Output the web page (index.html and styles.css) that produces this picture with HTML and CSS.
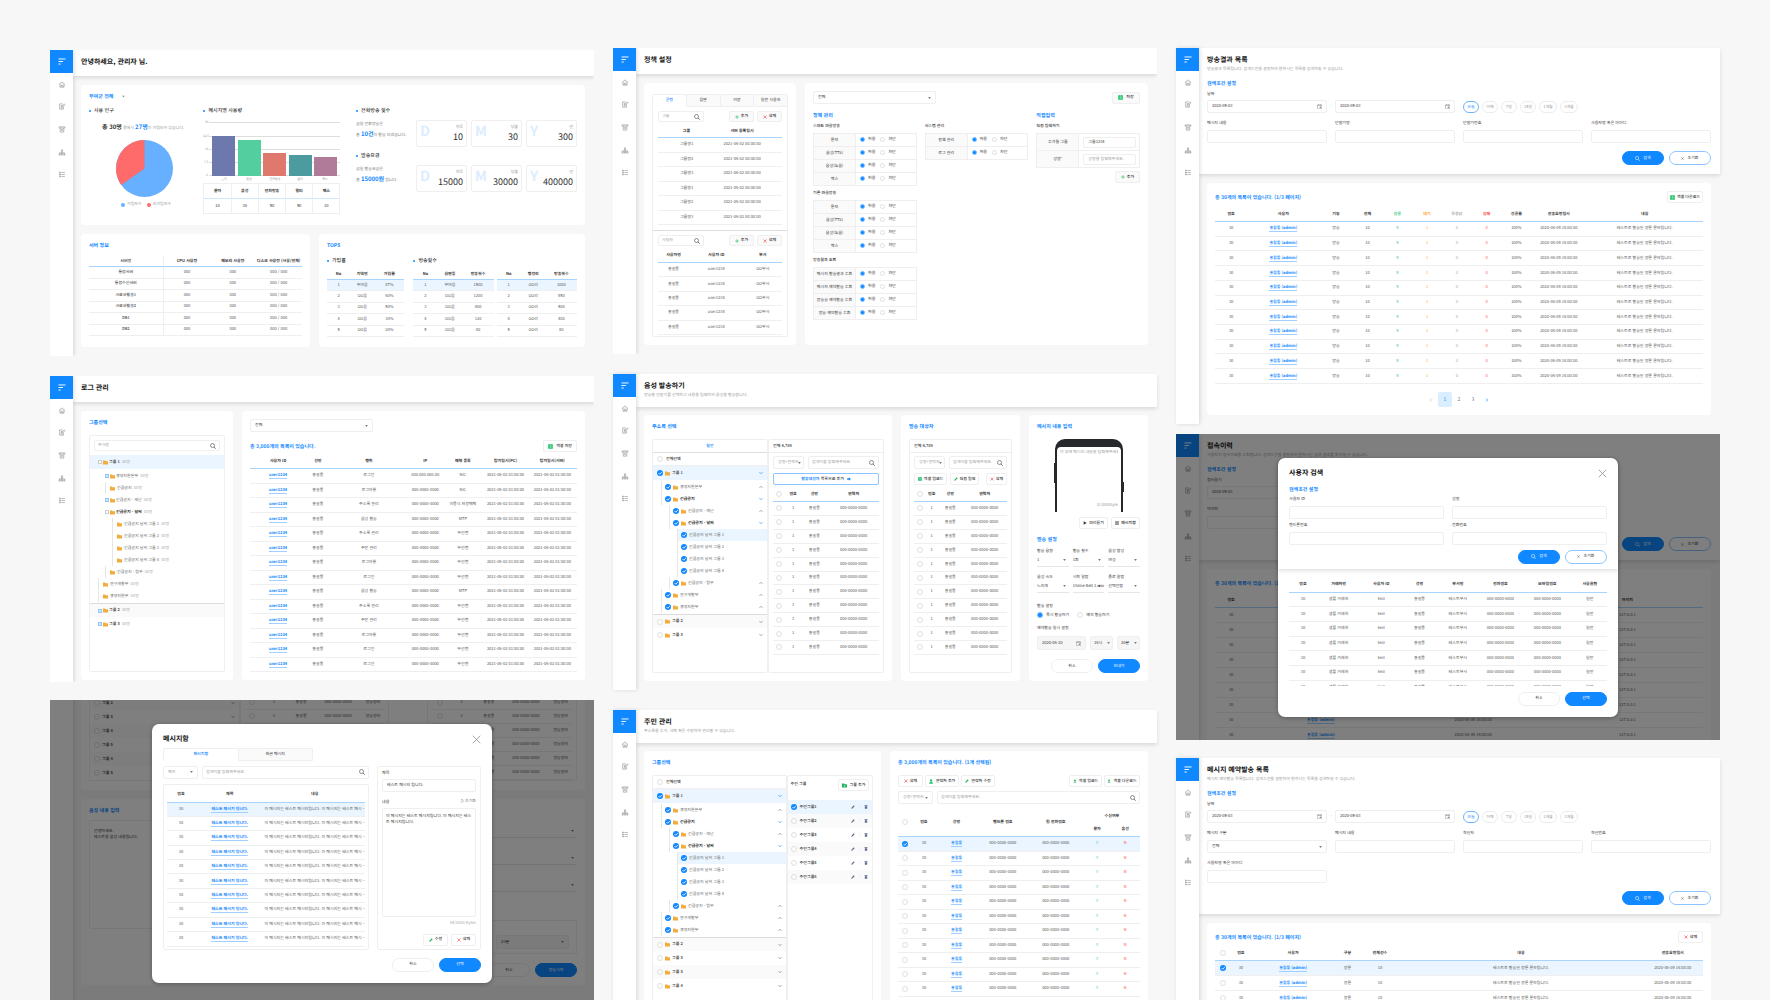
FILE: index.html
```html
<!DOCTYPE html>
<html lang="ko">
<head>
<meta charset="utf-8">
<meta name="viewport" content="width=device-width, initial-scale=1">
<title>마을방송 관리자</title>
<link rel="stylesheet" href="styles.css">
</head>
<body>
<svg class="sprite" aria-hidden="true">
  <symbol id="i-menu" viewBox="0 0 24 22"><path d="M1 3h22M1 11h14M1 19h7" stroke="currentColor" stroke-width="3" fill="none"/></symbol>
  <symbol id="i-home" viewBox="0 0 24 24"><path d="M2 12 12 3l10 9M5 10v11h14V10M9 21v-6h6v6M12 9v2" fill="none" stroke="currentColor" stroke-width="2"/></symbol>
  <symbol id="i-edit" viewBox="0 0 24 24"><path d="M14 3H4v18h13v-8M8 9h5M8 13h3M8 17h6M11 14l1-4 8-7 2 3-7 7z" fill="none" stroke="currentColor" stroke-width="2"/></symbol>
  <symbol id="i-box" viewBox="0 0 24 24"><path d="M2 3h20v4H2zM6 7v14h12V7M9 12h6M9 16h6" fill="none" stroke="currentColor" stroke-width="2"/></symbol>
  <symbol id="i-org" viewBox="0 0 24 24"><path d="M12 8v8M4 16v-3h16v3M10 3h4v5h-4zM2 16h4v5H2zM10 16h4v5h-4zM18 16h4v5h-4z" fill="none" stroke="currentColor" stroke-width="2"/></symbol>
  <symbol id="i-list" viewBox="0 0 24 24"><path d="M5 2v20M2 5h6M2 12h6M2 19h6M10 5h12M10 12h12M10 19h12" fill="none" stroke="currentColor" stroke-width="2"/></symbol>
  <symbol id="i-search" viewBox="0 0 24 24"><circle cx="10" cy="10" r="8" fill="none" stroke="currentColor" stroke-width="2.6"/><path d="m16 16 7 7" stroke="currentColor" stroke-width="3"/></symbol>
  <symbol id="i-folder" viewBox="0 0 24 22"><path d="M0 1h10l3 4h11v16H0z" fill="#f1ac3c"/></symbol>
  <symbol id="i-plus" viewBox="0 0 24 24"><path d="M12 1v22M1 12h22" stroke="#28c76f" stroke-width="4"/></symbol>
  <symbol id="i-del" viewBox="0 0 24 24"><path d="m3 3 18 18M21 3 3 21" stroke="#ff4d4d" stroke-width="4"/></symbol>
  <symbol id="i-x" viewBox="0 0 24 24"><path d="m2 2 20 20M22 2 2 22" stroke="currentColor" stroke-width="3"/></symbol>
  <symbol id="i-close" viewBox="0 0 24 24"><path d="m2 2 20 20M22 2 2 22" stroke="currentColor" stroke-width="2"/></symbol>
  <symbol id="i-pen" viewBox="0 0 24 24"><path d="m1 23 2-7L17 2l5 5L8 21z" fill="currentColor"/></symbol>
  <symbol id="i-trash" viewBox="0 0 24 24"><path d="M3 2h18v4H3zM5 8h14v15H5z" fill="currentColor"/></symbol>
  <symbol id="i-cal" viewBox="0 0 24 24"><path d="M2 4h20v19H2zM2 7h20M7 1v4M17 1v4" fill="none" stroke="currentColor" stroke-width="2"/><path d="M13 13h6v6h-6z" fill="currentColor"/></symbol>
  <symbol id="i-excel" viewBox="0 0 24 24"><path d="M1 1h22v22H1z" fill="#1fc36a"/><path d="M8 6h9M8 12h9M8 18h9" stroke="#fff" stroke-width="2"/></symbol>
  <symbol id="i-chev" viewBox="0 0 24 24"><path d="m3 7 9 9 9-9" fill="none" stroke="currentColor" stroke-width="4"/></symbol>
  <symbol id="i-caret" viewBox="0 0 24 24"><path d="M2 6h20L12 18z" fill="currentColor"/></symbol>
  <symbol id="i-go" viewBox="0 0 24 24"><path d="M1 7h11V1l11 11-11 11v-6H1z" fill="currentColor"/></symbol>
  <symbol id="i-play" viewBox="0 0 24 24"><path d="m4 2 18 10L4 22z" fill="currentColor"/></symbol>
  <symbol id="i-mail" viewBox="0 0 24 24"><path d="M1 4h22v17H1zM5 9h14M5 14h14" fill="none" stroke="currentColor" stroke-width="3"/></symbol>
  <symbol id="i-redo" viewBox="0 0 24 24"><path d="M4 12a8 8 0 1 0 8-8M12 0v8L7 4z" fill="none" stroke="currentColor" stroke-width="2"/></symbol>
  <symbol id="i-user" viewBox="0 0 24 24"><circle cx="10" cy="7" r="6" fill="#28c76f"/><path d="M0 23c0-12 20-12 20 0z" fill="#28c76f"/></symbol>
  <symbol id="i-up" viewBox="0 0 24 24"><path d="M12 1 4 10h5v8h6v-8h5zM4 20h16v3H4z" fill="#1fb45f"/></symbol>
  <symbol id="i-down" viewBox="0 0 24 24"><path d="m12 18 8-9h-5V1H9v8H4zM4 20h16v3H4z" fill="#1fb45f"/></symbol>
  <symbol id="i-addf" viewBox="0 0 24 22"><path d="M0 1h10l3 4h11v16H0z" fill="#1fb45f"/><path d="M12 9v8M8 13h8" stroke="#fff" stroke-width="2"/></symbol>
</svg>

<main class="canvas">
  <div class="stack">
    <section class="board board--wide">
      <div class="body">
        <header class="top"><h1>안녕하세요, 관리자 님.</h1></header>
        <div class="content content--dash">
          <article class="card card--usage">
            <h2 class="region">부여군 전체 <svg class="ic3"><use href="#i-caret"/></svg></h2>
            <div class="usage">
              <div class="people">
                <h3>사용 인구</h3>
                <p class="sum"><b>총 30명</b> 중에서 <b class="blue">27명</b>이 가입되어 있습니다.</p>
                <svg class="pie" viewBox="-1 -1 2 2"><circle r="1" fill="#66b0ff"/><path d="M0 0V-1A1 1 0 0 0-.817 .576Z" fill="#ff6b6b"/></svg>
                <p class="legend"><i class="dot dot--blue"></i>가입자수 <i class="dot dot--red"></i>비가입자수</p>
              </div>
              <div class="messages">
                <h3>메시지별 사용량</h3>
                <svg class="chart" viewBox="0 0 137 64">
                  <path d="M6 3.500H137M6 17.500H137M6 30.500H137M6 43.500H137M6 56.500H137" stroke="#ddd"/>
                  <g class="axis"><text x="2" y="4">30</text><text x="0" y="18">22.5</text><text x="2" y="31">15</text><text x="1" y="44">7.5</text><text x="3" y="57">0</text></g>
                  <path d="M9 17h23v40H9z" fill="#6d79ac"/><path d="M35 21h23v36H35z" fill="#52ce9f"/><path d="M60 34h23v23H60z" fill="#df786d"/><path d="M86 36h23v21H86z" fill="#4c9c9f"/><path d="M111 38h23v19h-23z" fill="#b07b99"/>
                  <g class="axis axis--x"><text x="21" y="61">문자</text><text x="46" y="61">음성</text><text x="72" y="61">전화방송</text><text x="97" y="61">멀티</text><text x="122" y="61">팩스</text></g>
                </svg>
                <table class="counts"><thead><tr><th>문자</th><th>음성</th><th>전화방송</th><th>멀티</th><th>팩스</th></tr></thead><tbody><tr><td>10</td><td>30</td><td>50</td><td>50</td><td>10</td></tr></tbody></table>
              </div>
              <div class="stats">
                <h3>전화방송 횟수</h3>
                <div class="stat"><p>금일 전화방송은<br>총 <b class="blue">10건</b>이 발송 되었습니다.</p>
                  <dl><div data-unit="D"><dt>하루</dt><dd>10</dd></div><div data-unit="M"><dt>당월</dt><dd>30</dd></div><div data-unit="Y"><dt>년</dt><dd>300</dd></div></dl></div>
                <h3>발송요금</h3>
                <div class="stat"><p>금일 발송요금은<br>총 <b class="blue">15000원</b> 입니다.</p>
                  <dl><div data-unit="D"><dt>하루</dt><dd>15000</dd></div><div data-unit="M"><dt>당월</dt><dd>30000</dd></div><div data-unit="Y"><dt>년</dt><dd>400000</dd></div></dl></div>
              </div>
            </div>
          </article>
          <div class="dash-row">
            <article class="card"><h2>서버 정보</h2><table class="data servers" data-table="servers"></table></article>
            <article class="card"><h2>TOP5</h2>
              <div class="tops">
                <div><h3>가입률</h3><table class="data top-table" data-table="top1"></table></div>
                <div><h3>방송횟수</h3><div class="pair"><table class="data top-table" data-table="top2"></table><table class="data top-table" data-table="top3"></table></div></div>
              </div>
            </article>
          </div>
        </div>
      </div>
    </section>

    <section class="board board--wide">
      <div class="body">
        <header class="top"><h1>로그 관리</h1></header>
        <div class="content cols-log">
          <article class="card"><h2>그룹선택</h2>
            <div class="pane pane--fill gap-lg">
              <div class="pad"><div class="search search--low"><input aria-label="부서명" placeholder="부서명"><svg class="ic6"><use href="#i-search"/></svg></div></div>
              <ul class="tree" data-tree="log"></ul>
            </div>
          </article>
          <article class="card">
            <select class="field w-select" aria-label="구분"><option>전체</option></select>
            <div class="bar bar--log"><h2>총 3,000개의 목록이 있습니다.</h2><button class="btn"><svg class="ic5"><use href="#i-excel"/></svg>엑셀 저장</button></div>
            <table class="data logs" data-table="logs"></table>
          </article>
        </div>
      </div>
    </section>

    <section class="board board--wide board--late">
      <div class="body body--scrolled">
        <article class="card card--cut">
          <div class="cut cut--list"><ul class="tree" data-tree="back"></ul></div>
          <div class="cut"><table class="data back" data-table="back1"></table></div>
          <div class="cut cut--gap"><table class="data back" data-table="back2"></table></div>
        </article>
        <article class="card card--voice">
          <div><h2>음성 내용 입력</h2><textarea class="area" aria-label="음성 내용">안녕하세요.
테스트용 음성 내용입니다.</textarea></div>
          <div class="settings">
            <select class="line" aria-label="음량"><option> </option></select>
            <select class="line" aria-label="횟수"><option> </option></select>
            <select class="line" aria-label="알람"><option> </option></select>
            <div class="reserve"><select class="field field--gray" aria-label="분"><option>23분</option></select></div>
            <div class="actions"><button class="pill">취소</button><button class="pill pill--on">방송시작</button></div>
          </div>
        </article>
      </div>
      <div class="veil">
        <div class="modal modal--msg" role="dialog" aria-label="메시지함">
          <header class="modal-top"><h1>메시지함</h1><button class="close" aria-label="닫기"><svg class="ic9"><use href="#i-close"/></svg></button></header>
          <div class="tabs tabs--msg"><button class="on">메시지함</button><button>최근 메시지</button></div>
          <div class="msg">
            <div class="msg-list">
              <div class="row"><select class="field w35 dim" aria-label="검색 항목"><option>제목</option></select><div class="search"><input aria-label="검색어" placeholder="검색어를 입력해주세요."><svg class="ic6"><use href="#i-search"/></svg></div></div>
              <div class="pane pane--table"><table class="data inbox" data-table="inbox"></table></div>
            </div>
            <div class="pane msg-form">
              <label class="lab" for="m-title">제목</label>
              <input class="field" id="m-title" value="테스트 메시지 입니다.">
              <div class="bar bar--lab"><label class="lab" for="m-body">내용</label><span class="reset"><svg class="ic4"><use href="#i-redo"/></svg> 초기화</span></div>
              <textarea class="area" id="m-body">이 메시지는 테스트 메시지입니다. 이 메시지는 테스트 메시지입니다.</textarea>
              <p class="bytes">65/2000 Bytes</p>
              <div class="actions actions--tight"><button class="btn w25"><svg class="ic4 green"><use href="#i-pen"/></svg>수정</button><button class="btn w25"><svg class="ic4"><use href="#i-del"/></svg>삭제</button></div>
            </div>
          </div>
          <div class="actions"><button class="pill">취소</button><button class="pill pill--on">선택</button></div>
        </div>
      </div>
    </section>
  </div>

  <div class="stack stack--high">
    <section class="board board--wide">
      <div class="body">
        <header class="top"><h1>정책 설정</h1></header>
        <div class="content cols-log">
          <article class="card card--policy">
            <div class="tabs"><button class="on">군청</button><button>읍면</button><button>이장</button><button>일반 사용자</button></div>
            <div class="pane pane--tabbed">
              <div class="tools"><div class="search search--low"><input aria-label="그룹" placeholder="그룹"><svg class="ic6"><use href="#i-search"/></svg></div><button class="btn btn--soft w25"><svg class="ic4"><use href="#i-plus"/></svg>추가</button><button class="btn btn--soft w25"><svg class="ic4"><use href="#i-del"/></svg>삭제</button></div>
              <table class="data groups" data-table="groups"></table>
              <hr>
              <div class="tools"><div class="search search--low"><input aria-label="사용자" placeholder="사용자"><svg class="ic6"><use href="#i-search"/></svg></div><button class="btn btn--soft w25"><svg class="ic4"><use href="#i-plus"/></svg>추가</button><button class="btn btn--soft w25"><svg class="ic4"><use href="#i-del"/></svg>삭제</button></div>
              <table class="data users" data-table="users"></table>
            </div>
          </article>
          <article class="card">
            <div class="bar"><select class="field w-select" aria-label="구분"><option>전체</option></select><button class="btn btn--soft w28"><svg class="ic5"><use href="#i-excel"/></svg>저장</button></div>
            <div class="policy">
              <div><h2>정책 관리</h2>
                <h4>스마트 마을방송</h4><table class="perm" data-perm="문자,음성(TTS),음성(녹음),팩스"></table>
                <h4>기존 마을방송</h4><table class="perm" data-perm="문자,음성(TTS),음성(녹음),팩스"></table>
                <h4>방송결과 조회</h4><table class="perm" data-perm="메시지 발송결과 조회,메시지 예약발송 조회,방송송 예약발송 조회,방송 예약발송 조회"></table>
              </div>
              <div class="policy-sys"><h4>시스템 관리</h4><table class="perm" data-perm="정책 관리,로그 관리"></table></div>
              <div><h2>직접입력</h2><h4>직접 입력하기</h4>
                <table class="perm perm--input"><tr><th><label for="g-name">추가될 그룹</label></th><td><input class="field field--low" id="g-name" value="그룹1234"></td></tr><tr><th><label for="g-user">성명<i class="req">*</i></label></th><td><input class="field field--low" id="g-user" placeholder="성명을 입력해주세요."></td></tr></table>
                <div class="actions actions--sm"><button class="btn btn--soft w25"><svg class="ic4"><use href="#i-plus"/></svg>추가</button></div>
              </div>
            </div>
          </article>
        </div>
      </div>
    </section>

    <section class="board">
      <div class="body">
        <header class="top"><h1>음성 발송하기</h1><p>방송할 단말기를 선택하고 내용을 입력하여 음성을 발송합니다.</p></header>
        <div class="content cols-send">
          <article class="card"><h2>주소록 선택</h2>
            <div class="split gap-lg">
              <div class="pane"><div class="strip strip--on">일반</div><label class="strip strip--all"><input type="checkbox">전체선택</label><ul class="tree" data-tree="send"></ul></div>
              <div class="pane"><div class="strip strip--line">전체 4,789</div>
                <div class="pad pad--high"><div class="row"><select class="field w31 dim" aria-label="검색 항목"><option>성명+연락처</option></select><div class="search"><input aria-label="검색어" placeholder="검색어를 입력해주세요."><svg class="ic6"><use href="#i-search"/></svg></div></div>
                <button class="btn btn--add"><span><b class="blue">발송대상자</b> 목록으로 추가</span><svg class="ic4 blue"><use href="#i-go"/></svg></button>
                <table class="data phones" data-table="phones1"></table></div>
              </div>
            </div>
          </article>
          <article class="card"><h2>발송 대상자</h2>
            <div class="pane pane--fill gap-lg"><div class="strip strip--line">전체 4,789</div>
              <div class="pad pad--high"><div class="row"><select class="field w31 dim" aria-label="검색 항목"><option>성명+연락처</option></select><div class="search"><input aria-label="검색어" placeholder="검색어를 입력해주세요."><svg class="ic6"><use href="#i-search"/></svg></div></div>
              <div class="row row--btns"><button class="btn w33"><svg class="ic4"><use href="#i-excel"/></svg>엑셀 업로드</button><button class="btn w29"><svg class="ic4 green"><use href="#i-pen"/></svg>직접 입력</button><button class="btn w21 push"><svg class="ic4"><use href="#i-del"/></svg>삭제</button></div>
              <table class="data phones" data-table="phones2"></table></div>
            </div>
          </article>
          <article class="card card--compose"><h2>메시지 내용 입력</h2>
            <div class="phone"><div class="screen"><textarea aria-label="메시지 내용" placeholder="이 곳에 메시지 내용을 입력해주세요."></textarea><p>0/1000byte</p></div></div>
            <div class="actions actions--tight"><button class="btn w29"><svg class="ic4"><use href="#i-play"/></svg>미리듣기</button><button class="btn w29"><svg class="ic4"><use href="#i-mail"/></svg>메시지함</button></div>
            <h2 class="sub">발송 설정</h2>
            <div class="opts">
              <label>발송 음량<select class="line"><option>1</option></select></label><label>발송 횟수<select class="line"><option>1회</option></select></label><label>음성 합성<select class="line"><option>여성</option></select></label>
              <label>음성 속도<select class="line"><option>느리게</option></select></label><label>시작 알람<select class="line"><option>Chime Bell 1.wav</option></select></label><label>종료 알람<select class="line"><option>선택안함</option></select></label>
            </div>
            <p class="lab">발송 설정</p>
            <div class="radios"><label><input type="radio" name="when" checked>즉시 발송하기</label><label><input type="radio" name="when">예약 발송하기</label></div>
            <p class="lab">예약발송 일시 설정</p>
            <div class="when"><div class="date date--gray"><input aria-label="날짜" value="2020-06-10"><svg class="ic5"><use href="#i-cal"/></svg></div><select class="field field--gray" aria-label="시"><option>16시</option></select><select class="field field--gray" aria-label="분"><option>20분</option></select></div>
            <div class="actions"><button class="pill">취소</button><button class="pill pill--on">보내기</button></div>
          </article>
        </div>
      </div>
    </section>

    <section class="board">
      <div class="body">
        <header class="top"><h1>주민 관리</h1><p>주소록을 추가, 삭제 혹은 수정하여 관리할 수 있습니다.</p></header>
        <div class="content cols-people">
          <article class="card"><h2>그룹선택</h2>
            <div class="split split--people gap-lg">
              <div class="pane"><label class="strip strip--all"><input type="checkbox">전체선택</label><ul class="tree" data-tree="people"></ul></div>
              <div class="pane"><div class="bar bar--group"><h4>주민 그룹</h4><button class="btn w31"><svg class="ic5"><use href="#i-addf"/></svg>그룹 추가</button></div><ul class="villages" data-villages></ul></div>
            </div>
          </article>
          <article class="card"><h2>총 3,000개의 목록이 있습니다. (1개 선택됨)</h2>
            <div class="row row--top"><button class="btn w25"><svg class="ic4"><use href="#i-del"/></svg>삭제</button><button class="btn w34"><svg class="ic5"><use href="#i-user"/></svg>연락처 추가</button><button class="btn w34"><svg class="ic4 green"><use href="#i-pen"/></svg>연락처 수정</button><button class="btn w33 push"><svg class="ic4"><use href="#i-up"/></svg>엑셀 업로드</button><button class="btn w36"><svg class="ic4"><use href="#i-down"/></svg>엑셀 다운로드</button></div>
            <div class="row row--find"><select class="field w35 dim" aria-label="검색 항목"><option>성명+연락처</option></select><div class="search"><input aria-label="검색어" placeholder="검색어를 입력해주세요."><svg class="ic6"><use href="#i-search"/></svg></div></div>
            <table class="data people-table" data-table="people"></table>
          </article>
        </div>
      </div>
    </section>
  </div>

  <div class="stack stack--high">
    <section class="board">
      <div class="body">
        <header class="top"><h1>방송결과 목록</h1><p>방송결과 목록입니다. 검색조건을 설정하여 원하시는 목록을 검색하실 수 있습니다.</p>
          <form class="filter"><h2>검색조건 설정</h2>
            <div class="fields"><div class="range"><span class="lab">날짜</span><div class="date"><input aria-label="시작일" value="2020-05-03"><svg class="ic5"><use href="#i-cal"/></svg></div><i>-</i><div class="date"><input aria-label="종료일" value="2020-05-03"><svg class="ic5"><use href="#i-cal"/></svg></div></div>
            <div class="chips" data-chips></div>
            <label>메시지 내용<input class="field"></label><label>단말기명<input class="field"></label><label>단말기번호<input class="field"></label><label>사용자명 혹은 아이디<input class="field"></label></div>
            <div class="actions"><button type="button" class="pill pill--on"><svg class="ic5"><use href="#i-search"/></svg>검색</button><button type="button" class="pill pill--line"><svg class="ic3"><use href="#i-x"/></svg>초기화</button></div>
          </form>
        </header>
        <div class="content">
          <article class="card card--list"><div class="bar"><h2>총 30개의 목록이 있습니다. (1/3 페이지)</h2><button class="btn w36"><svg class="ic5"><use href="#i-excel"/></svg>엑셀 다운로드</button></div>
            <table class="data results" data-table="results"></table>
            <nav class="pages" aria-label="페이지"><a href="#prev" class="prev"><svg class="ic4"><use href="#i-chev"/></svg></a><a href="#1" class="on">1</a><a href="#2">2</a><a href="#3">3</a><a href="#next" class="next"><svg class="ic4"><use href="#i-chev"/></svg></a></nav>
          </article>
        </div>
      </div>
    </section>

    <section class="board board--wide board--near">
      <div class="body">
        <header class="top"><h1>접속이력</h1><p>사용자의 접속이력을 조회합니다. 검색조건을 설정하여 원하시는 검색 결과를 찾으실 수 있습니다.</p>
          <form class="filter"><h2>검색조건 설정</h2>
            <div class="fields"><div class="range"><span class="lab">접속일시</span><div class="date"><input aria-label="시작일" value="2020-05-03"><svg class="ic5"><use href="#i-cal"/></svg></div><i>-</i><div class="date"><input aria-label="종료일" value="2020-05-03"><svg class="ic5"><use href="#i-cal"/></svg></div></div><span></span><span></span>
            <label>아이피<input class="field"></label></div>
            <div class="actions"><button type="button" class="pill pill--on"><svg class="ic5"><use href="#i-search"/></svg>검색</button><button type="button" class="pill pill--line"><svg class="ic3"><use href="#i-x"/></svg>초기화</button></div>
          </form>
        </header>
        <div class="content">
          <article class="card card--list"><div class="bar"><h2>총 30개의 목록이 있습니다. (1/3 페이지)</h2></div>
            <table class="data results" data-table="access"></table></article>
        </div>
      </div>
      <div class="veil">
        <div class="modal modal--user" role="dialog" aria-label="사용자 검색">
          <div class="modal-head">
            <header class="modal-top"><h1>사용자 검색</h1><button class="close" aria-label="닫기"><svg class="ic9"><use href="#i-close"/></svg></button></header>
            <h2>검색조건 설정</h2>
            <div class="fields fields--two"><label>사용자 ID<input class="field"></label><label>성명<input class="field"></label><label>핸드폰번호<input class="field"></label><label>전화번호<input class="field"></label></div>
            <div class="actions"><button class="pill pill--on"><svg class="ic5"><use href="#i-search"/></svg>검색</button><button class="pill pill--line"><svg class="ic3"><use href="#i-x"/></svg>초기화</button></div>
          </div>
          <div class="modal-list"><table class="data found" data-table="found"></table></div>
          <div class="actions"><button class="pill">취소</button><button class="pill pill--on">선택</button></div>
        </div>
      </div>
    </section>

    <section class="board board--late">
      <div class="body">
        <header class="top"><h1>메시지 예약발송 목록</h1><p>메시지 예약발송 목록입니다. 검색조건을 설정하여 원하시는 목록을 검색하실 수 있습니다.</p>
          <form class="filter"><h2>검색조건 설정</h2>
            <div class="fields"><div class="range"><span class="lab">날짜</span><div class="date"><input aria-label="시작일" value="2020-05-03"><svg class="ic5"><use href="#i-cal"/></svg></div><i>-</i><div class="date"><input aria-label="종료일" value="2020-05-03"><svg class="ic5"><use href="#i-cal"/></svg></div></div>
            <div class="chips" data-chips></div>
            <label>메시지 구분<select class="field"><option>전체</option></select></label><label>메시지 내용<input class="field"></label><label>착신자<input class="field"></label><label>착신번호<input class="field"></label><label>사용자명 혹은 아이디<input class="field"></label></div>
            <div class="actions"><button type="button" class="pill pill--on"><svg class="ic5"><use href="#i-search"/></svg>검색</button><button type="button" class="pill pill--line"><svg class="ic3"><use href="#i-x"/></svg>초기화</button></div>
          </form>
        </header>
        <div class="content">
          <article class="card card--list"><div class="bar"><h2>총 30개의 목록이 있습니다. (1/3 페이지)</h2><button class="btn w25"><svg class="ic4"><use href="#i-del"/></svg>삭제</button></div>
            <table class="data results results--near" data-table="reserved"></table></article>
        </div>
      </div>
    </section>
  </div>
</main>
<script src="app.js"></script>
</body>
</html>
```
FILE: styles.css
```css
* { box-sizing: border-box; margin: 0; padding: 0; }
body { background: #f7f7f7; color: #333; font: 4px/5px "Noto Sans CJK KR", "Noto Sans", sans-serif; text-rendering: geometricPrecision; }
ul { list-style: none; }
i { font-style: normal; }
button, input, select, textarea { font: inherit; color: inherit; background: none; border: 0; outline: 0; appearance: none; min-width: 0; text-rendering: inherit; }
button { cursor: pointer; white-space: nowrap; }
textarea { resize: none; overflow: hidden; }
::placeholder { color: #999; opacity: 1; }
svg { flex: none; display: block; }
.sprite { position: absolute; width: 0; height: 0; }
.ic3 { width: 3px; height: 3px; }
.ic4 { width: 4px; height: 4px; }
.ic5 { width: 5px; height: 5px; }
.ic6 { width: 6px; height: 6px; }
.ic9 { width: 9px; height: 9px; }
.blue { color: #1088ff; }
.green { color: #1fb45f; }
.push { margin-left: auto; }
.w21 { width: 21px; } .w25 { width: 25px; } .w28 { width: 28px; } .w29 { width: 29px; } .w31 { width: 31px; }
.w33 { width: 33px; } .w34 { width: 34px; } .w35 { width: 35px; } .w36 { width: 36px; }

/* canvas of artboards */
.canvas { display: grid; grid-template-columns: repeat(3, 1fr); gap: 19px; height: 100vh; padding: 0 50px; overflow: hidden; }
.stack { display: flex; flex-direction: column; gap: 20px; padding-top: 50px; min-width: 0; }
.stack--high { padding-top: 48px; }
.board { position: relative; flex: none; display: flex; background: #f7f7f7; }
.board--wide { aspect-ratio: 16 / 9; overflow: hidden; }
.board--late { margin-top: -2px; }
.board--near { margin-top: -10px; }

.side { position: relative; z-index: 1; flex: none; width: 23px; background: #fff; box-shadow: 1px 0 4px rgba(0, 0, 0, .14); color: #8c8c8c; }
.side .logo { display: grid; place-items: center; height: 23px; background: #1088ff; color: #fff; }
.side nav { display: flex; flex-direction: column; height: 113px; }
.side a { flex: 1; display: grid; place-items: center; color: inherit; }
.side a svg, .logo svg { width: 8px; height: 7px; }
.body { flex: 1; min-width: 0; display: flex; flex-direction: column; }
.top { padding: 8px 9px 9px 8px; background: #fff; box-shadow: 0 2px 4px rgba(0, 0, 0, .12); }
h1 { font-size: 7px; line-height: 9px; font-weight: 700; color: #111; }
.top > p { margin-top: 2px; color: #999; }
h2 { font-size: 5px; line-height: 7px; font-weight: 700; color: #1088ff; }
h3 { display: flex; align-items: center; gap: 3px; font-size: 5px; line-height: 8px; font-weight: 500; }
h3::before { content: ""; width: 2px; height: 2px; border-radius: 1px; background: #1088ff; }
h4 { font-size: 4px; line-height: 5px; font-weight: 500; }
.content { flex: 1; min-height: 0; padding: 9px 9px 9px 8px; display: grid; gap: 9px; }
.card { min-width: 0; padding: 8px; border-radius: 4px; background: #fff; display: flex; flex-direction: column; }
.bar, .row { display: flex; align-items: center; justify-content: space-between; }
.row { gap: 4px; justify-content: flex-start; }

/* controls */
.btn { display: inline-flex; align-items: center; justify-content: center; gap: 3px; height: 12px; padding: 0 4px; border: 1px solid #efefef; border-radius: 2px; background: #fff; color: #333; font-weight: 500; }
.btn--soft { background: #fafafa; }
.btn.w21, .btn.w25, .btn.w29, .btn.w33, .btn.w34, .btn.w36 { padding: 0; gap: 2px; }
.pill { display: inline-flex; align-items: center; justify-content: center; gap: 3px; width: 42px; height: 14px; border: 1px solid #efefef; border-radius: 7px; background: #fff; }
.pill--on { background: #1088ff; border-color: #1088ff; color: #fff; }
.pill--line { border-color: #8cc5ff; }
.actions { display: flex; justify-content: flex-end; gap: 5px; }
.actions--tight { gap: 3px; }
.field { display: block; width: 100%; height: 13px; padding: 0 4px; border: 1px solid #efefef; border-radius: 2px; background-color: #fff; }
.field--low { height: 11px; }
.field--gray { background-color: #f6f6f6; height: 14px; }
.field.w35 { width: 35px; flex: none; }
.field.dim { color: #999; }
.field.w-select { width: 123px; }
select.field, select.line { background-image: url("data:image/svg+xml,%3Csvg xmlns='http://www.w3.org/2000/svg' viewBox='0 0 8 6'%3E%3Cpath d='M0 0h8L4 6z' fill='%23777'/%3E%3C/svg%3E"); background-repeat: no-repeat; background-size: 3px 2px; background-position: right 4px center; }
select.field.w31 { width: 31px; flex: none; padding-right: 0; background-position: right 2px center; }
.search { flex: 1; min-width: 0; display: flex; align-items: center; height: 13px; padding: 0 3px; border: 1px solid #efefef; border-radius: 2px; background: #fff; color: #555; }
.search--low { height: 11px; }
.search input { flex: 1; width: 0; }
.date { flex: 1; display: flex; align-items: center; height: 13px; padding: 0 4px; border: 1px solid #efefef; border-radius: 2px; background: #fff; }
.date input { flex: 1; width: 0; }
.date svg { color: #777; }
.date--gray { background: #f6f6f6; height: 14px; }
.lab { display: block; line-height: 5px; }
.line { width: 100%; height: 13px; border-bottom: 1px solid #e6e6e6; }
select.line { background-position: right 3px center; }
input[type="checkbox"], input[type="radio"] { flex: none; width: 6px; height: 6px; border: 1px solid #e0e0e0; border-radius: 50%; background: #fff; vertical-align: middle; }
input[type="radio"] { width: 5px; height: 5px; }
input[type="radio"]:checked { border-color: #7fbeff; background: #1088ff; }
input[type="checkbox"]:checked { border: 0; background: #1088ff url("data:image/svg+xml,%3Csvg xmlns='http://www.w3.org/2000/svg' viewBox='0 0 12 12'%3E%3Cpath d='m3 6 2.500 2.500L9.500 4' fill='none' stroke='white' stroke-width='1.600'/%3E%3C/svg%3E"); }
.area { display: block; width: 100%; padding: 4px; border: 1px solid #efefef; border-radius: 2px; line-height: 6px; word-break: break-all; }

/* data tables */
table { border-collapse: separate; border-spacing: 0; }
.data { width: 100%; table-layout: fixed; text-align: center; white-space: nowrap; }
.data th { height: 15px; font-weight: 700; color: #333; border-bottom: 1px solid #a9d4ff; }
.data td { color: #555; border-bottom: 1px solid #efefef; overflow: hidden; }
.data td, .data th { line-height: 5px; }
.data tr.hot td { background: #eaf5ff; }
.data a { color: #1088ff; font-weight: 700; text-decoration: none; border-bottom: 1px solid #9fd0ff; }
.c-green { color: #28c76f; }
.c-orange { color: #ff9f1a; }
.c-red { color: #ff4d4d; }
.c-gray { color: #aaa; }
.results { margin-top: 4px; }
.results--near { margin-top: 3px; }
.results tr > * { height: 15px; }
[data-table="results"] { height: 177px; }
[data-table="results"] td { height: auto; }

/* dashboard */
.content--dash { grid-template-rows: 140fr 113fr; }
.region { display: flex; align-items: center; gap: 9px; color: #1088ff; }
.region svg { color: #777; }
.usage { display: grid; grid-template-columns: 114fr 152fr 220fr; margin-top: 7px; }
.people .sum { margin: 8px 0; padding-left: 13px; line-height: 8px; color: #999; white-space: nowrap; }
.sum b { font-size: 6px; color: #333; }
.sum b.blue, .stat b.blue { color: #1088ff; }
.pie { width: 57px; height: 57px; margin-left: 27px; }
.legend { display: flex; align-items: center; gap: 2px; margin: 5px 0 0 32px; color: #999; }
.dot { width: 4px; height: 4px; border-radius: 50%; }
.dot--blue { background: #66b0ff; }
.dot--red { background: #ff6b6b; margin-left: 3px; }
.chart { width: 137px; height: 64px; margin-top: 4px; }
.axis { font-size: 3px; fill: #999; }
.axis--x { text-anchor: middle; }
.counts { width: 137px; table-layout: fixed; text-align: center; border: 1px solid #efefef; border-width: 1px 0 0 1px; }
.counts th, .counts td { height: 15px; border-right: 1px solid #efefef; border-bottom: 1px solid #efefef; font-weight: 400; }
.counts th { border-bottom-color: #cfe7ff; font-weight: 700; }
.stats h3 { margin-bottom: 5px; }
.stat { display: flex; justify-content: space-between; margin-bottom: 5px; }
.stat p { white-space: nowrap; color: #777; line-height: 9px; }
.stat b { font-size: 6px; }
.stat dl { display: flex; gap: 4px; }
.stat dl div { position: relative; width: 51px; height: 27px; padding: 4px 3px; border: 1px solid #efefef; border-radius: 2px; text-align: right; }
.stat dl div::before { content: attr(data-unit); position: absolute; left: 3px; top: 2px; font-size: 14px; line-height: 16px; font-weight: 700; color: #dcedff; }
.stat dt { position: relative; color: #999; }
.stat dd { position: relative; font-size: 9px; line-height: 13px; }
.dash-row { display: grid; grid-template-columns: 229fr 266fr; gap: 9px; }
.servers { height: 80px; margin-top: 7px; }
.servers th { height: 11px; }
.servers th:first-child, .servers td:first-child { border-right: 1px solid #efefef; font-weight: 500; }
.tops { display: grid; grid-template-columns: 79fr 167fr; gap: 9px; margin-top: 8px; }
.pair { display: grid; grid-template-columns: 1fr 1fr; gap: 3px; }
.top-table { height: 68px; margin-top: 4px; }
.top-table th { height: 11px; }

/* two-column boards */
.cols-log { grid-template-columns: 152fr 343fr; }
.cols-send { grid-template-columns: 248fr 119fr 119fr; padding-top: 8px; }
.cols-people { grid-template-columns: 237fr 258fr; padding-top: 8px; }
.pane { min-width: 0; border: 1px solid #efefef; border-radius: 2px; }
.pane--fill { flex: 1; }
.gap-lg { margin-top: 9px; }
.pad { padding: 4px; }
.pad--high { padding-top: 3px; }
.bar--log { margin: 8px 0 3px; height: 12px; }
.logs { height: 217px; flex: none; }
.logs th { height: 14px; }

/* trees */
.tree li { display: flex; align-items: center; gap: 2px; height: 12px; margin-left: calc(var(--lv) * 8px); padding: 0 4px 0 3px; border-left: 1px solid #e6e6e6; white-space: nowrap; color: #666; }
.tree li.root { height: 14px; border-left: 0; padding-left: 4px; color: #333; font-weight: 500; }
.tree li.root.on { margin-bottom: 1px; }
.tree li.strong { color: #222; font-weight: 700; }
.tree li.on { background: #eaf5ff; }
.tree li.alt { background: #fafafa; }
.tree li.rule { margin-top: 1px; border-top: 1px solid #ddd; }
.tree small { margin-left: 1px; font-size: 4px; color: #aaa; font-weight: 400; }
.tree .chev { margin-left: auto; width: 4px; height: 4px; color: #777; }
.tree .chev--open { color: #1088ff; }
.tree .chev--up { transform: rotate(180deg); }
[data-tree="log"] li { margin-left: calc(8px + var(--lv) * 7px); padding-left: 4px; }
[data-tree="log"] li.root { margin-left: 0; padding-left: 8px; }
[data-tree="log"] li.box { border-left: 0; padding-left: 0; gap: 1px; }
[data-tree="log"] li.root.box { padding-left: 8px; }
.tog { display: grid; place-items: center; width: 4px; height: 4px; border: 1px solid #8cc5ff; background: #d8ecff; }
.tog--minus { border-color: #ccc; background: #fff; }

/* policy */
.card--policy { padding-top: 11px; }
.tabs { display: flex; }
.tabs button { flex: 1; height: 13px; border: 1px solid #efefef; border-radius: 2px 2px 0 0; background: #fafafa; margin-right: -1px; }
.tabs button:last-child { margin-right: 0; }
.tabs button.on { background: #fff; border-bottom-color: #fff; color: #1088ff; font-weight: 500; }
.pane--tabbed { flex: 1; padding: 4px 5px 0; border-top: 0; }
.tools { display: flex; gap: 3px; margin-bottom: 3px; }
.tools .search { flex: none; width: 46px; }
.tools .btn { height: 11px; }
.tools .search + .btn { margin-left: auto; }
.pane hr { border: 0; border-top: 1px solid #ddd; margin: 5px -5px 4px; }
.groups { height: 100px; }
.groups th { height: 13px; }
.groups th:last-child, .groups td:last-child { padding-right: 13px; }
.users { height: 86px; }
.users th { height: 14px; }
.policy { display: grid; grid-template-columns: repeat(3, 1fr); gap: 8px; margin-top: 8px; }
.policy h2 { margin-bottom: 5px; }
.policy h4 { margin-bottom: 4px; }
.policy-sys { padding-top: 12px; }
.perm { width: 100%; table-layout: fixed; border: 1px solid #efefef; border-bottom: 0; white-space: nowrap; margin-bottom: 5px; }
.perm th { width: 42px; height: 13px; background: #fafafa; font-weight: 400; text-align: center; border-right: 1px solid #efefef; border-bottom: 1px solid #efefef; }
.perm td { border-bottom: 1px solid #efefef; padding-left: 4px; }
.perm label + label { margin-left: 5px; }
.perm td label { display: inline-flex; align-items: center; gap: 3px; }
.perm--input { margin-bottom: 3px; }
.perm--input th { height: 17px; }
.perm--input td { padding: 0 3px 0 4px; }
.req { color: #ff4d4d; }

/* voice send */
.split { flex: 1; display: grid; grid-template-columns: 1fr 1fr; }
.split--people { grid-template-columns: 134fr 86fr; }
.strip { display: flex; align-items: center; gap: 3px; height: 13px; padding: 0 4px; border-bottom: 1px solid #efefef; font-weight: 500; }
.strip--on { justify-content: center; color: #1088ff; border-bottom-color: #ddd; }
.btn--add { width: 100%; margin-top: 4px; border-color: #8cc5ff; }
.row--btns { margin-top: 4px; gap: 3px; }
.phones { margin-top: 3px; height: 167px; }
.phones th { height: 14px; }
.phone { position: relative; width: 68px; height: 73px; margin: 9px 0 5px 18px; padding: 8px 2px 0; border-radius: 10px 10px 0 0; background: #26282b; flex: none; }
.phone::before, .phone::after { content: ""; position: absolute; width: 1px; background: #26282b; }
.phone::before { left: -1px; top: 24px; height: 20px; }
.phone::after { right: -1px; top: 43px; height: 10px; }
.screen { height: 65px; padding: 3px 3px 4px; border-radius: 4px 4px 0 0; background: #fff; display: flex; flex-direction: column; }
.screen textarea { flex: 1; width: 100%; white-space: nowrap; text-align: center; }
.screen p { text-align: right; color: #999; }
.card--compose .sub { margin: 7px 0 6px; }
.opts { display: grid; grid-template-columns: repeat(3, 1fr); gap: 8px 4px; margin-bottom: 11px; }
.opts .line { display: block; }
.opts label { display: block; min-width: 0; }
.radios { display: flex; gap: 8px; margin: 3px 0 8px; }
.radios label { display: flex; align-items: center; gap: 3px; }
.radios input[type="radio"] { width: 6px; height: 6px; }
.when { display: grid; grid-template-columns: 49fr 23fr 23fr; gap: 4px; margin: 5px 0 9px; }
.when .field { padding-left: 3px; background-position: right 2px center; }
.card--compose > * { flex: none; }

/* residents */
.bar--group { height: 24px; padding: 0 3px; align-items: flex-start; }
.bar--group h4 { margin-top: 6px; }
.bar--group .btn { margin-top: 3px; }
.villages li { display: flex; align-items: center; gap: 2px; height: 14px; padding: 0 4px 0 3px; color: #5d6b8c; }
.villages li:nth-child(even) { background: #fafafa; }
.villages li.on { background: #eaf5ff; }
.villages label { display: flex; align-items: center; gap: 3px; margin-right: auto; color: #333; font-weight: 500; }
.villages span { margin: 0 2px; color: #ddd; }
.row--top { margin-top: 9px; gap: 2px; }
.row--find { margin: 4px 0 5px; }
.people-table { height: 231px; }
.people-table th { height: 14px; border-bottom: 0; }
.people-table th[rowspan], .people-table tr:nth-child(2) th { border-bottom: 1px solid #a9d4ff; }

/* filters */
.filter h2, .modal h2 { margin: 8px 0 5px; }
.fields { display: grid; grid-template-columns: repeat(4, 1fr); gap: 8px; margin-bottom: 8px; }
.fields label .field { margin-top: 4px; }
.fields label { display: block; min-width: 0; }
.range { grid-column: span 2; display: flex; flex-wrap: wrap; align-items: center; row-gap: 3px; }
.range .lab { width: 100%; }
.range > i { width: 8px; text-align: center; color: #999; }
.chips { grid-column: span 2; display: flex; align-items: flex-end; gap: 3px; }
.chips button { width: 16px; height: 12px; border: 1px solid #ececec; border-radius: 6px; color: #999; }
.chips button:nth-child(n+5) { width: 18px; }
.chips .on { border-color: #6cb5ff; color: #1088ff; }
.card--list .bar { height: 12px; }
.pages { display: flex; justify-content: center; margin-top: 8px; }
.pages a { display: grid; place-items: center; width: 14px; height: 15px; border-radius: 2px; font-size: 5px; color: #777; text-decoration: none; }
.pages a.on { background: #dbeeff; color: #1088ff; }
.pages a.prev { color: #bbb; }
.pages a.next { color: #1088ff; }
.prev svg { transform: rotate(90deg); }
.next svg { transform: rotate(-90deg); }

/* dialogs */
.veil { position: absolute; inset: 0; z-index: 2; display: flex; align-items: center; justify-content: center; background: rgba(0, 0, 0, .5); }
.modal { width: 340px; padding: 11px; border-radius: 7px; background: #fff; box-shadow: 0 1px 4px rgba(0, 0, 0, .3); }
.modal-top { display: flex; justify-content: space-between; align-items: center; height: 9px; }
.close { color: #888; }
.modal-head { margin: -11px -11px 0; padding: 11px 11px 5px; border-radius: 7px 7px 0 0; box-shadow: 0 2px 4px rgba(0, 0, 0, .12); }
.modal-head h2 { margin-bottom: 4px; }
.fields--two { grid-template-columns: 1fr 1fr; gap: 4px 8px; margin-bottom: 5px; }
.modal-list { height: 108px; margin: 9px 0 6px; overflow: hidden; }
.found { height: 118px; }
.tabs--msg { width: 150px; margin: 4px 0 5px; }
.msg { display: grid; grid-template-columns: 206fr 104fr; gap: 8px; margin-bottom: 8px; }
.pane--table { margin-top: 5px; padding: 3px 3px 2px; }
.inbox { height: 159px; }
.inbox th { height: 15px; }
.msg-form { padding: 3px 4px; display: flex; flex-direction: column; }
.msg-form .lab { line-height: 6px; }
.msg-form .field { margin-top: 3px; }
.bar--lab { margin: 7px 0 3px; height: 6px; }
.reset { display: flex; gap: 1px; color: #777; }
.msg-form .area { height: 109px; padding: 4px 3px; }
.bytes { margin: 4px 0 8px; text-align: right; color: #aaa; }

/* page behind the message dialog */
.body--scrolled { padding: 0 9px 15px 8px; gap: 9px; }
.card--cut { flex: none; display: grid; grid-template-columns: 150fr 149fr 187fr; height: 90px; padding: 0 8px 9px; border-radius: 0 0 4px 4px; }
.cut { display: flex; flex-direction: column; justify-content: flex-end; height: 81px; overflow: hidden; border: 1px solid #efefef; border-top: 0; padding: 0 4px; }
.cut--list { padding: 0; }
.cut--gap { margin-left: 38px; }
.back td { height: 14px; }
.card--voice { flex: none; height: 186px; display: grid; grid-template-columns: 1fr 1fr; gap: 16px; }
.card--voice .area { height: 109px; margin-top: 6px; padding-top: 7px; }
.settings { display: flex; flex-direction: column; padding-top: 18px; }
.settings .line { flex: none; margin-bottom: 14px; }
.reserve { display: flex; justify-content: flex-end; align-items: flex-end; height: 34px; margin: 14px 0 9px; padding: 0 7px 4px; border: 1px solid #efefef; }
.reserve .field { width: 73px; }
```
FILE: app.js
```js
const icon = (id, cls) => `<svg class="${cls}"><use href="#i-${id}"/></svg>`;
const box = on => `<input type="checkbox" aria-label="선택"${on ? ' checked' : ''}>`;
const rep = (n, row) => Array.from({ length: n }, () => row);

// sidebar
document.querySelectorAll('.board').forEach(board => {
  const side = document.createElement('aside');
  side.className = 'side';
  if (!board.querySelector('.body--scrolled')) {
    side.innerHTML = `<a class="logo" href="#menu" aria-label="메뉴">${icon('menu', '')}</a><nav>` +
      ['home', 'edit', 'box', 'org', 'list'].map(n => `<a href="#${n}" aria-label="${n}">${icon(n, '')}</a>`).join('') + '</nav>';
  }
  board.prepend(side);
});

// tables: column widths in percent, head, rows, highlighted first row
const admin = '<a href="#user">홍길동 (admin)</a>';
const tel = '000-0000-0000';
const topRows = (name, vals) => vals.map((v, i) => [i + 1, i || name === 'OO리' ? name : '부여읍', v]);
const stamp = '2021-06-02 01:00:00';
const log = (act, kind, ip) => ['<a href="#user">user1234</a>', '홍길동', act, ip || tel, kind, stamp, stamp];
const msg = ['30', '<a href="#msg">테스트 메시지 입니다.</a>', '이 메시지는 테스트 메시지입니다. 이 메시지는 테스트 메시 ···'];
const c = (name, v) => `<span class="c-${name}">${v}</span>`;
const phones = { w: [12, 14, 26, 48], head: [box(), '번호', '성명', '연락처'], rows: rep(11, [box(), '1', '홍길동', tel]) };
const back = { w: [11, 20, 19, 34, 16], head: [], rows: rep(6, [box(), '1', '홍길동', tel, '방송장비']) };

const tables = {
  servers: { w: [35, 22, 21, 22], head: ['서버명', 'CPU 사용량', '메모리 사용량', '디스크 사용량 (사용/전체)'],
    rows: ['통합서버', '통합수신서버', '크로샷발송1', '크로샷발송2', 'DB1', 'DB2'].map(n => [n, '000', '000', '000 / 000']) },
  top1: { hot: 1, w: [30, 31, 39], head: ['No', '지역명', '가입률'], rows: topRows('OO읍', ['87%', '60%', '50%', '30%', '20%']) },
  top2: { hot: 1, w: [30, 31, 39], head: ['No', '읍면동', '방송횟수'], rows: topRows('OO읍', [1500, 1200, 800, 120, 80]) },
  top3: { hot: 1, w: [30, 31, 39], head: ['No', '행정리', '방송횟수'], rows: topRows('OO리', [1000, 950, 500, 400, 80]) },
  groups: { w: [46, 54], head: ['그룹', '서버 등록일시'], rows: [1, 2, 3, 1, 2, 3].map(n => ['그룹명' + n, '2021-06-02 00:00:00']) },
  users: { w: [25, 44, 31], head: ['사용자명', '사용자 ID', '부서'], rows: rep(5, ['홍길동', 'user1234', 'OO부서']) },
  results: { w: [6.6, 14.8, 6.8, 6.1, 6.1, 6.1, 6.1, 6.1, 6.1, 11.3, 23.9],
    head: ['번호', '사용자', '기능', '전체', c('green', '성공'), c('orange', '대기'), c('gray', '무응답'), c('red', '실패'), '성공률', '전송요청일시', '내용'],
    rows: rep(11, ['30', admin, '방송', '10', c('green', 9), c('orange', 1), c('gray', 0), c('red', 0), '100%', '2020-06-09 16:00:00', '테스트로 발송된 장문 문자입니다.']) },
  logs: { w: [17.2, 7.1, 24.1, 10.4, 12.6, 13.5, 15.1], head: ['사용자 ID', '성명', '행위', 'IP', '매체 종류', '탐지일시(PC)', '탐지일시(서버)'],
    rows: [log('로그인', 'NIC', '000.000.000.00'), log('로그아웃', 'NIC'), log('주소록 관리', '이동식 저장매체'), log('음성 발송', 'MTP'),
      log('주소록 관리', '무선랜'), log('주민 관리', '무선랜'), log('로그아웃', '무선랜'), log('로그인', '무선랜'), log('음성 발송', 'MTP'),
      log('주소록 관리', '무선랜'), log('주민 관리', '무선랜'), log('로그아웃', '무선랜'), log('로그인', '무선랜'), log('로그인', '무선랜')] },
  phones1: phones,
  phones2: phones,
  back1: back,
  back2: back,
  access: { w: [6.6, 30.2, 32.2, 31], head: ['번호', '사용자', '접속일시', '아이피'], rows: rep(10, ['30', admin, '2020-06-09 16:00:00', '127.0.0.1']) },
  found: { w: [8.8, 13.6, 13.2, 10.9, 13.2, 13.6, 15.9, 10.8], head: ['번호', '거래처명', '사용자 ID', '성명', '부서명', '전화번호', '모바일번호', '사용권한'],
    rows: rep(7, ['30', '샘플 거래처', 'test', '홍길동', '테스트부서', tel, tel, '일반']) },
  inbox: { hot: 1, w: [14.2, 35, 50.8], head: ['번호', '제목', '내용'], rows: rep(10, msg) },
  reserved: { hot: 1, w: [3.1, 4.4, 17, 5.3, 8, 49.8, 12.4], head: [box(), '번호', '사용자', '구분', '전체건수', '내용', '전송요청일시'],
    rows: rep(6, 0).map((_, i) => [box(!i), '30', admin, '장문', '10', '테스트로 발송된 장문 문자입니다.', '2020-06-09 16:00:00']) },
  people: { hot: 1, w: [6, 9.4, 17.6, 20.6, 23.2, 11, 12.2],
    headHtml: `<tr>${[box(), '번호', '성명', '핸드폰 번호', '집 전화번호'].map(h => `<th rowspan="2">${h}</th>`).join('')}<th colspan="2">수신여부</th></tr><tr><th>문자</th><th>음성</th></tr>`,
    rows: rep(14, 0).map((_, i) => [box(!i), '30', '<a href="#user">홍길동</a>', tel, tel, c('green', 'Y'), c('red', 'N')]) }
};

document.querySelectorAll('[data-table]').forEach(el => {
  const t = tables[el.dataset.table];
  const head = t.headHtml || (t.head.length ? `<tr>${t.head.map(h => `<th>${h}</th>`).join('')}</tr>` : '');
  el.innerHTML = `<colgroup>${t.w.map(w => `<col style="width:${w}%">`).join('')}</colgroup><thead>${head}</thead><tbody>` +
    t.rows.map((r, i) => `<tr${t.hot && !i ? ' class="hot"' : ''}>${r.map(v => `<td>${v}</td>`).join('')}</tr>`).join('') + '</tbody>';
});

// permission tables
document.querySelectorAll('[data-perm]').forEach((el, n) => {
  el.innerHTML = el.dataset.perm.split(',').map((name, i) =>
    `<tr><th>${name}</th><td><label><input type="radio" name="p${n}-${i}" checked>허용</label><label><input type="radio" name="p${n}-${i}">차단</label></td></tr>`).join('');
});

// address trees: level, label, state, classes
const weather = [1, 2, 3, 4].map(n => [3, '긴급공지 날씨 그룹 ' + n, '', n === 1 ? 'on' : '']);
const office = [[0, '그룹 1', 'open', 'root on'], [1, '경영지원본부', 'up', ''], [1, '긴급공지', 'open', 'strong'], [2, '긴급공지 - 재난', 'up', ''],
  [2, '긴급공지 - 날씨', 'open', 'strong'], ...weather, [2, '긴급공지 - 업무', 'up', ''], [1, '연구개발부', 'up', ''], [1, '경영지원부', 'up', '']];
const roots = (names, first) => names.map((n, i) => [0, n, 'down', 'root' + (i % 2 ? '' : ' alt') + (!i && first ? ' rule' : '')]);
const trees = {
  send: [...office, ...roots(['그룹 2', '그룹 3'], true)],
  people: [...office, ...roots(['그룹 2', '그룹 3', '그룹 3', '그룹 4'], true)],
  back: roots(['그룹 2', '그룹 3', '그룹 4', '그룹 5', '그룹 4', '그룹 5'])
};
Object.entries(trees).forEach(([name, rows]) => {
  document.querySelector(`[data-tree="${name}"]`).innerHTML = rows.map(([lv, label, state, cls]) =>
    `<li class="${cls}" style="--lv:${lv}">${box(state !== 'down')}${state && name !== 'back' ? icon('folder', 'ic5') : ''}<span>${label}</span>` +
    (state ? icon('chev', `chev chev--${state}`) : '') + '</li>').join('');
});
const logTree = [[0, '그룹 1', '-', 'root on'], [1, '경영지원본부', '+', ''], [1, '긴급공지', '', ''], [1, '긴급공지 - 재난', '+', ''], [1, '긴급공지 - 날씨', '-', 'strong'],
  ...[1, 2, 3, 4].map(n => [2, '긴급공지 날씨 그룹 ' + n, '', '']), [1, '긴급공지 - 업무', '', ''], [0, '연구개발부', '', ''], [0, '경영지원부', '', ''],
  [0, '그룹 2', '+', 'root alt rule'], [0, '그룹 3', '+', 'root']];
document.querySelector('[data-tree="log"]').innerHTML = logTree.map(([lv, label, tog, cls]) =>
  `<li class="${cls}${tog ? ' box' : ''}" style="--lv:${lv}">${tog ? `<i class="tog${tog === '-' ? ' tog--minus' : ''}"></i>` : ''}${icon('folder', 'ic5')}<span>${label} <small>00명</small></span></li>`).join('');

document.querySelector('[data-villages]').innerHTML = [1, 2, 3, 4, 5, 6].map(n =>
  `<li${n === 1 ? ' class="on"' : ''}><label><input type="checkbox"${n === 1 ? ' checked' : ''}>주민그룹${n}</label>${icon('pen', 'ic4')}<span>|</span>${icon('trash', 'ic4')}</li>`).join('');

document.querySelectorAll('[data-chips]').forEach(el => {
  el.innerHTML = ['오늘', '어제', '7일', '15일', '1개월', '3개월'].map((n, i) => `<button type="button"${i ? '' : ' class="on"'}>${n}</button>`).join('');
});
```
